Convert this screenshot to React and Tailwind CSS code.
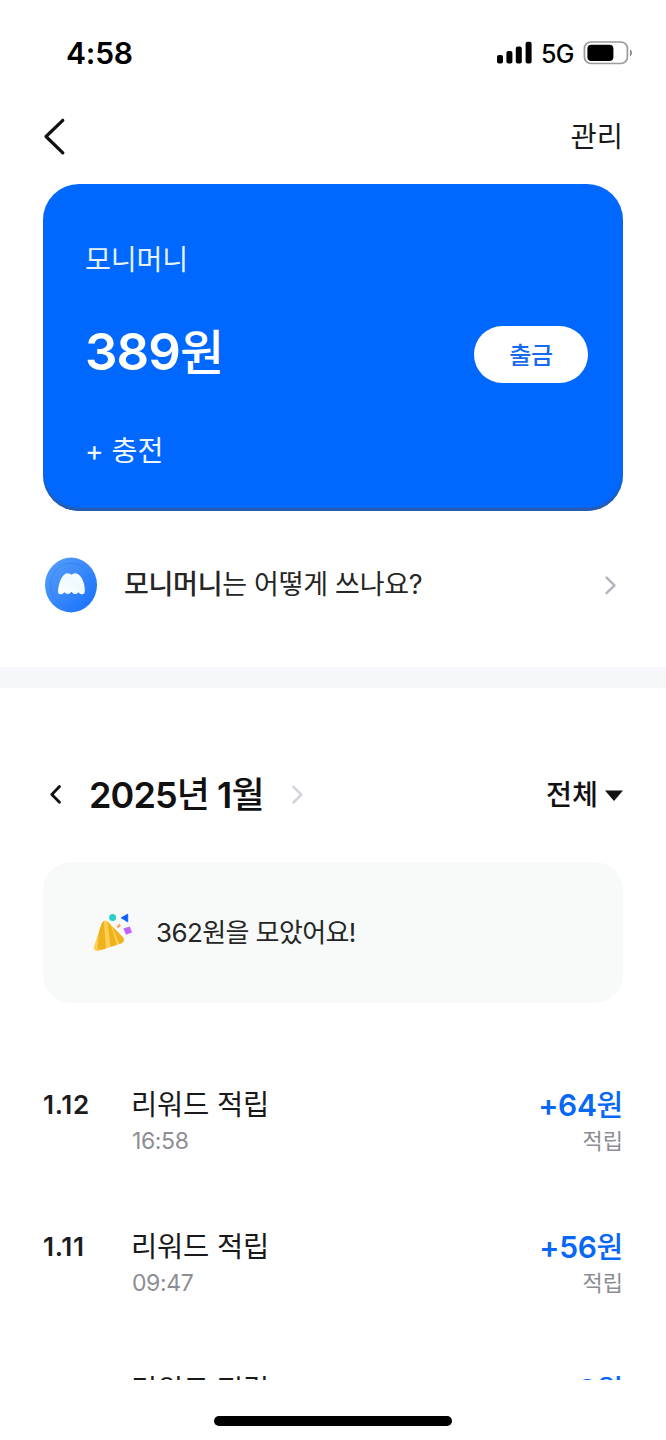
import React from "react";

const rows = [
  { date: "1.12", title: "리워드 적립", time: "16:58", amount: "+64", kind: "적립" },
  { date: "1.11", title: "리워드 적립", time: "09:47", amount: "+56", kind: "적립" },
  { date: "", title: "리워드 적립", time: "", amount: "+9", kind: "" },
];

function Chevron({ className, d, width }) {
  return (
    <svg className={className} viewBox="0 0 24 40" fill="none" stroke="currentColor" strokeWidth={width} strokeLinecap="round" strokeLinejoin="round">
      <path d={d} />
    </svg>
  );
}

function StatusBar() {
  return (
    <div className="flex h-[105px] items-start justify-between pl-[66px] pr-[32px] pt-[33px] text-black">
      <span className="text-[30px] leading-[40px] font-semibold tracking-[-0.2px]">4:58</span>
      <div className="flex h-10 items-center">
        <svg className="h-6 w-9" viewBox="0 0 36 24" fill="currentColor">
          <rect x="0" y="14" width="6" height="8.5" rx="2" />
          <rect x="9.4" y="10" width="6" height="12.5" rx="2" />
          <rect x="18.8" y="5.5" width="6" height="17" rx="2" />
          <rect x="28.6" y="0.8" width="6" height="21.7" rx="2" />
        </svg>
        <span className="ml-2 w-[35px] pt-[2px] text-[25px] leading-[40px] font-medium tracking-[-0.6px]">5G</span>
        <svg className="ml-[7px] mr-px h-6 w-[50px]" viewBox="0 0 50 24" fill="none">
          <rect x="1.4" y="1" width="43" height="21.5" rx="6.5" stroke="#9b9b9b" strokeWidth="1.7" />
          <rect x="4.4" y="3.7" width="26" height="16.2" rx="4" fill="#000" />
          <path d="M47 8.2c2.6 1.4 2.6 5.8 0 7.2z" fill="#8b8b8b" />
        </svg>
      </div>
    </div>
  );
}

function MoneyCard() {
  return (
    <section className="mx-[43px] mt-[16px] flex h-[327px] flex-col rounded-[36px] bg-[#0068ff] pl-[42px] pr-[35px] text-white shadow-[inset_0_-3px_2px_0_#2a5ca8]">
      <p className="mt-[56px] h-10 text-[28.2px] leading-[40px] tracking-[-0.2px] text-[#e6f2ff]">모니머니</p>
      <div className="mt-[46px] flex h-[57px] items-center justify-between">
        <p className="-mt-[6px] text-[51px] leading-[57px] font-semibold tracking-[-0.9px]">389<span className="font-medium text-[48px]">원</span></p>
        <button className="h-[57px] w-[114px] rounded-full bg-white pt-[2px] text-[24px] font-medium tracking-[-0.3px] text-[#1769ee]">출금</button>
      </div>
      <p className="mt-[48px] h-10 text-[28.2px] leading-[40px] text-[#eff7ff]">+ 충전</p>
    </section>
  );
}

function Coin() {
  return (
    <svg className="h-[56px] w-[54px]" viewBox="0 0 54 56">
      <defs>
        <linearGradient id="coin" x1="0" y1="0" x2="1" y2="1">
          <stop offset="0" stopColor="#58a0f8" />
          <stop offset="0.5" stopColor="#3988fb" />
          <stop offset="1" stopColor="#126cff" />
        </linearGradient>
        <linearGradient id="mark" x1="1" y1="0" x2="0" y2="1">
          <stop offset="0" stopColor="#fff" />
          <stop offset="0.4" stopColor="#eefaff" />
          <stop offset="1" stopColor="#fff" />
        </linearGradient>
      </defs>
      <ellipse cx="27" cy="28" rx="26" ry="27.4" fill="url(#coin)" />
      <ellipse cx="27" cy="28" rx="20.5" ry="22" fill="none" stroke="#2b7af0" strokeWidth="0.8" opacity="0.7" />
      <path d="M23.3 16.2Q25.8 16 27.5 17.8Q29.2 16 31.7 16.2C37.5 17 41.4 27 40.8 34.8Q40.5 37.6 37.8 37.3Q35.8 37.2 34.4 35.2Q32.6 37.5 30.6 37Q28.8 36.6 27.4 34.8Q26 36.8 24 37Q22 37.2 20.5 35.2Q19 37.2 17 37.3Q14 37.5 14 34.5C14.4 26 18 16.8 23.3 16.2Z" fill="url(#mark)" />
    </svg>
  );
}

function Popper() {
  return (
    <svg className="h-10 w-10" viewBox="0 0 40 40">
      <defs>
        <clipPath id="cone">
          <path d="M8.7 10.5Q11.2 5.4 15 9L30.2 24.6Q32.2 28.7 28 30.5L5.2 38Q.4 38.6 1 33.5Z" />
        </clipPath>
      </defs>
      <g clipPath="url(#cone)">
        <rect width="40" height="40" fill="#ffce52" />
        <path d="M7 5L4.5 36L13.2 38L10.5 5Z" fill="#edb21d" />
        <path d="M14 6L18 36L24.5 34L16 6Z" fill="#edb21d" />
        <path d="M18 10L27.5 34L34 30L22 12Z" fill="#edb21d" />
      </g>
      <circle cx="19.6" cy="4.5" r="3.5" fill="#2ad0c7" />
      <path d="M28 4.8L34.8 1V9Z" fill="#075eff" stroke="#075eff" strokeWidth="0.6" strokeLinejoin="round" />
      <path d="M24.3 14.3L27.2 11.7" stroke="#ff9d64" strokeWidth="2.4" />
      <path d="M30.3 15.6L36.8 13.4L39 19.5L33 21.8Z" fill="#c860fa" />
    </svg>
  );
}

function Transaction({ row }) {
  return (
    <li className="flex h-[142px] items-start last:pt-px">
      <span className="w-[89px] pt-px text-[26px] leading-[40px] font-semibold tracking-[0.7px] text-[#1c1c1e]">{row.date}</span>
      <div className="flex flex-1 flex-col pt-px">
        <span className="-ml-px h-10 text-[28.5px] leading-[40px] tracking-[-0.2px] text-[#191919]">{row.title}</span>
        <span className="h-8 text-[23px] leading-[32px] tracking-[-0.4px] text-[#8c8e95]">{row.time}</span>
      </div>
      <div className="flex flex-col items-end">
        <span className="h-10 pt-px text-[30px] leading-[40px] font-semibold tracking-[-0.3px] text-[#0868f5]">{row.amount}<span className="text-[29px] font-medium">원</span></span>
        <span className="h-8 pt-px text-[22px] leading-[32px] text-[#8c8e95]">{row.kind}</span>
      </div>
    </li>
  );
}

export default function App() {
  return (
    <main className="flex h-[1440px] w-[666px] flex-col overflow-hidden bg-white font-['Inter','Noto_Sans_CJK_KR',sans-serif]">
      <StatusBar />
      <header className="flex h-[63px] items-center justify-between pl-[42px] pr-[43px]">
        <Chevron className="h-10 w-6 text-[#111]" d="M20.8 3.3L4 19.5L20.8 35.9" width="3.2" />
        <span className="text-[28.5px] leading-[40px] text-[#191919]">관리</span>
      </header>
      <MoneyCard />
      <section className="flex h-[156px] items-start justify-between pl-[44px] pr-[43px] pt-[46px]">
        <div className="flex h-[56px] items-center">
          <Coin />
          <p className="ml-[26px] text-[27px] leading-[40px] tracking-[-0.28px] text-[#252525]"><span className="font-medium">모니머니</span>는 어떻게 쓰나요?</p>
        </div>
        <div className="flex h-[56px] items-center">
          <Chevron className="h-10 w-6 text-[#b5b6bf]" d="M7.5 12.5L15.5 20.3L7.5 28.2" width="2.5" />
        </div>
      </section>
      <div className="h-[21px] shrink-0 bg-[#f5f7fa]" />
      <section className="flex h-[174px] items-end px-[43px] pb-[43px] pt-[83px]">
        <div className="flex h-12 flex-1 items-center">
          <Chevron className="h-10 w-6 text-[#111]" d="M16.5 11.5L8.8 19.4L16.5 27.3" width="2.8" />
          <h1 className="ml-[22px] text-[36px] leading-[48px] font-semibold tracking-[-0.9px] text-[#111]">2025<span className="font-medium">년</span> 1<span className="font-medium">월</span></h1>
          <Chevron className="ml-[21px] h-10 w-6 text-[#d3d3dd]" d="M8.5 11.9L16.3 19.7L8.5 27.5" width="2.5" />
        </div>
        <div className="flex h-12 items-center text-[28.3px] font-medium text-[#111]">
          <span className="leading-[40px]">전체</span>
          <svg className="ml-[7px] h-3 w-[18px]" viewBox="0 0 18 12"><path d="M0 1.5H18L9 12Z" fill="currentColor" /></svg>
        </div>
      </section>
      <section className="mx-[43px] flex h-[141px] shrink-0 items-center rounded-[28px] bg-[#f7faf9] pl-[50px]">
        <Popper />
        <p className="ml-[23px] text-[26px] leading-[40px] tracking-[-0.6px] text-[#252525]">362원을 모았어요!</p>
      </section>
      <ul className="mt-[81px] h-[296px] shrink-0 overflow-hidden px-[43px]">
        {rows.map((row, i) => <Transaction key={i} row={row} />)}
      </ul>
      <div className="mx-auto mt-[36px] h-[10px] w-[238px] shrink-0 rounded-full bg-black" />
    </main>
  );
}
